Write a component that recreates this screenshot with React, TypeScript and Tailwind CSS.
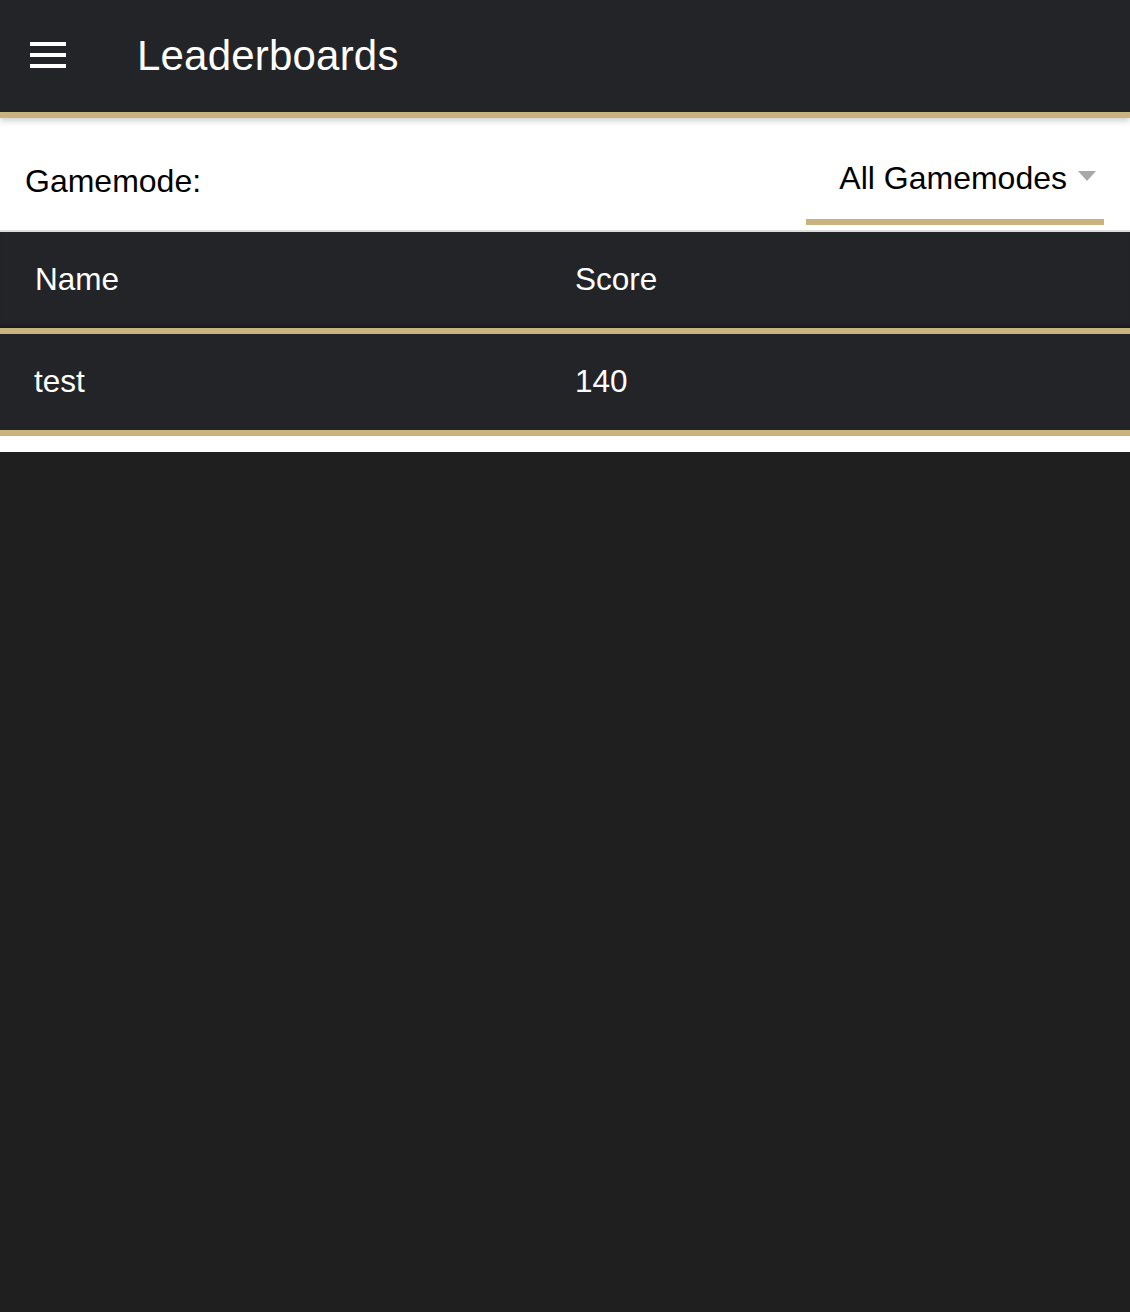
const font = "font-['Helvetica','Liberation_Sans',Arial,sans-serif]";

const MenuIcon = () => (
  <div className="flex w-[36px] flex-col gap-[7px]">
    <span className="block h-[4px] w-full bg-white" />
    <span className="block h-[4px] w-full bg-white" />
    <span className="block h-[4px] w-full bg-white" />
  </div>
);

const scores = [{ name: "test", score: 140 }];

const App = () => {
  return (
    <div className={`min-h-[1312px] w-full bg-[#201f20] ${font}`}>
      <header className="relative z-10 flex h-[118px] items-center border-b-[6px] border-[#c9b47f] bg-[#232428] shadow-[0_3px_6px_rgba(0,0,0,0.18)]">
        <div className="ml-[30px] pb-[2px]">
          <MenuIcon />
        </div>
        <h1 className="ml-[71px] text-[42px] leading-none font-medium tracking-[0.2px] text-white">
          Leaderboards
        </h1>
      </header>

      <div className="flex h-[114px] items-start justify-between border-b-2 border-[#dcdcdc] bg-white">
        <label className="mt-[47px] ml-[25px] text-[32px] leading-none text-black">
          Gamemode:
        </label>
        <div className="mr-[26px] flex w-[298px] flex-col">
          <div className="mt-[41px] flex h-[38px] items-center justify-end pr-[8px]">
            <span className="text-[32px] leading-none text-black">All Gamemodes</span>
            <svg className="ml-[11px] mb-[4px]" width="18" height="10" viewBox="0 0 18 10">
              <path d="M0 0 H18 L9 10 Z" fill="#a8a8a8" />
            </svg>
          </div>
          <div className="mt-[22px] h-[6px] w-full bg-[#c9b47f]" />
        </div>
      </div>

      <div className="bg-white pb-[16px]">
        <div className="flex h-[102px] items-center border-b-[6px] border-[#c9b47f] bg-[#232428] pl-[35px] text-[31.5px] leading-none text-white shadow-[inset_0_-6px_4px_-4px_rgba(0,0,0,0.35)]">
          <div className="w-[540px]">Name</div>
          <div>Score</div>
        </div>
        {scores.map((row) => (
          <div
            key={row.name}
            className="flex h-[102px] items-center border-b-[6px] border-[#c9b47f] bg-[#232428] pl-[34px] text-[31.5px] leading-none text-white"
          >
            <div className="w-[541px]">{row.name}</div>
            <div>{row.score}</div>
          </div>
        ))}
      </div>
    </div>
  );
};

export default App;
